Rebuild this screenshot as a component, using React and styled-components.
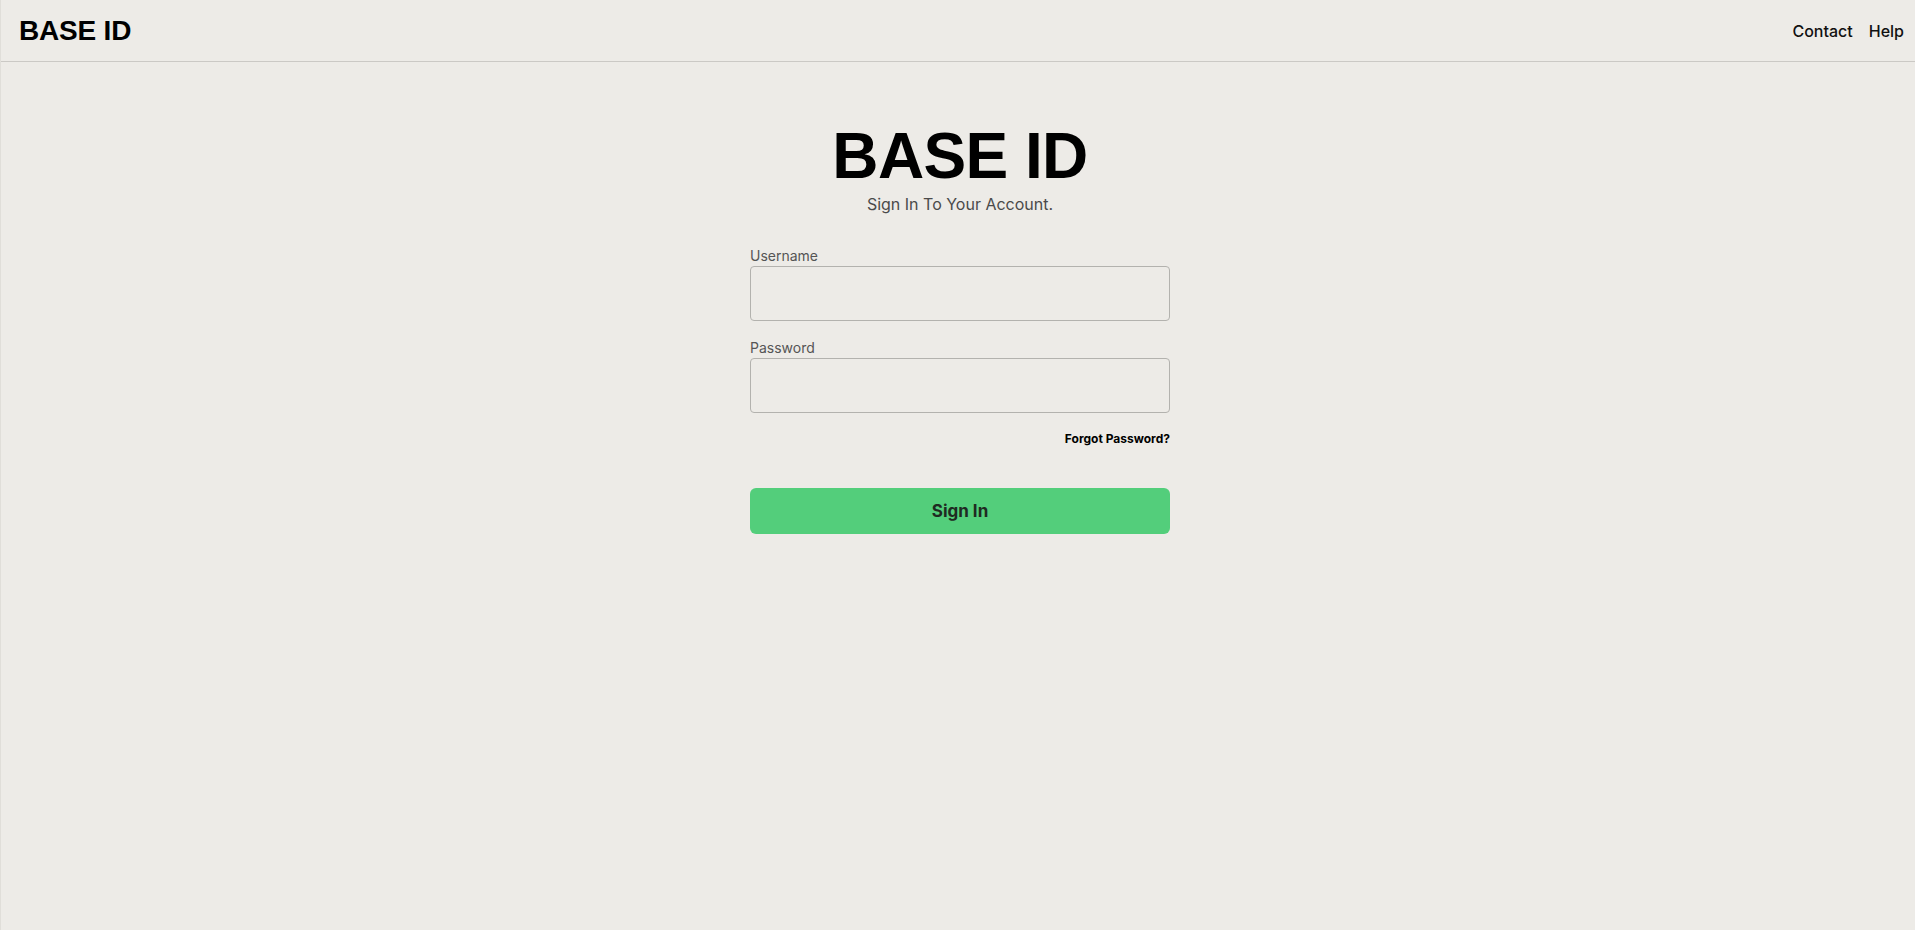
import styled, { createGlobalStyle } from 'styled-components';

const GlobalStyle = createGlobalStyle`
  html, body {
    margin: 0;
    padding: 0;
    background: #edebe7;
  }
  body {
    font-family: Inter, "Noto Sans", sans-serif;
    color: #111;
  }
  * {
    box-sizing: border-box;
  }
`;

const Page = styled.div`
  min-height: 930px;
  background: #edebe7;
  border-left: 1px solid #e0ded9;
`;

const Header = styled.header`
  height: 62px;
  padding: 0 11px 0 18px;
  display: flex;
  justify-content: space-between;
  align-items: center;
  border-bottom: 1px solid #cbc9c5;
`;

const Logo = styled.div`
  font-family: "Liberation Sans", Arial, sans-serif;
  font-weight: 700;
  font-size: 28px;
  letter-spacing: -0.2px;
  color: #000;
  line-height: 1;
`;

const Nav = styled.nav`
  display: flex;
  gap: 16px;
`;

const NavLink = styled.a`
  font-size: 16px;
  font-weight: 500;
  color: #111;
  text-decoration: none;
  cursor: pointer;
`;

const Main = styled.main`
  display: flex;
  flex-direction: column;
  align-items: center;
  padding: 62px 0 0 4px;
`;

const Title = styled.h1`
  margin: 0;
  font-family: "Liberation Sans", Arial, sans-serif;
  font-weight: 700;
  font-size: 64px;
  line-height: 1;
  letter-spacing: -0.6px;
  color: #000;
`;

const Subtitle = styled.p`
  margin: 6px 0 0;
  font-size: 16px;
  line-height: 20px;
  color: #4a4a4a;
`;

const Form = styled.form`
  width: 420px;
  margin-top: 33px;
  display: flex;
  flex-direction: column;
`;

const Field = styled.div`
  display: flex;
  flex-direction: column;
  gap: 2px;
  margin-bottom: ${(p) => p.$gap || 0}px;
`;

const Label = styled.label`
  font-size: 14px;
  line-height: 17px;
  color: #555;
`;

const Input = styled.input`
  height: 55px;
  width: 100%;
  background: transparent;
  border: 1px solid #b3b2ae;
  border-radius: 4px;
  padding: 0 14px;
  font-family: inherit;
  font-size: 16px;
  outline: none;
`;

const Forgot = styled.a`
  align-self: flex-end;
  margin-top: 18px;
  font-size: 12px;
  line-height: 15px;
  font-weight: 700;
  color: #000;
  cursor: pointer;
`;

const Button = styled.button`
  margin-top: 42px;
  height: 46px;
  width: 100%;
  border: none;
  border-radius: 6px;
  background: #53ce7b;
  color: #1f2a22;
  font-family: inherit;
  font-size: 17px;
  font-weight: 700;
  cursor: pointer;
`;

export default function App() {
  return (
    <>
      <GlobalStyle />
      <Page>
        <Header>
          <Logo>BASE ID</Logo>
          <Nav>
            <NavLink>Contact</NavLink>
            <NavLink>Help</NavLink>
          </Nav>
        </Header>
        <Main>
          <Title>BASE ID</Title>
          <Subtitle>Sign In To Your Account.</Subtitle>
          <Form onSubmit={(e) => e.preventDefault()}>
            <Field $gap={18}>
              <Label htmlFor="username">Username</Label>
              <Input id="username" type="text" />
            </Field>
            <Field>
              <Label htmlFor="password">Password</Label>
              <Input id="password" type="password" />
            </Field>
            <Forgot>Forgot Password?</Forgot>
            <Button type="submit">Sign In</Button>
          </Form>
        </Main>
      </Page>
    </>
  );
}
